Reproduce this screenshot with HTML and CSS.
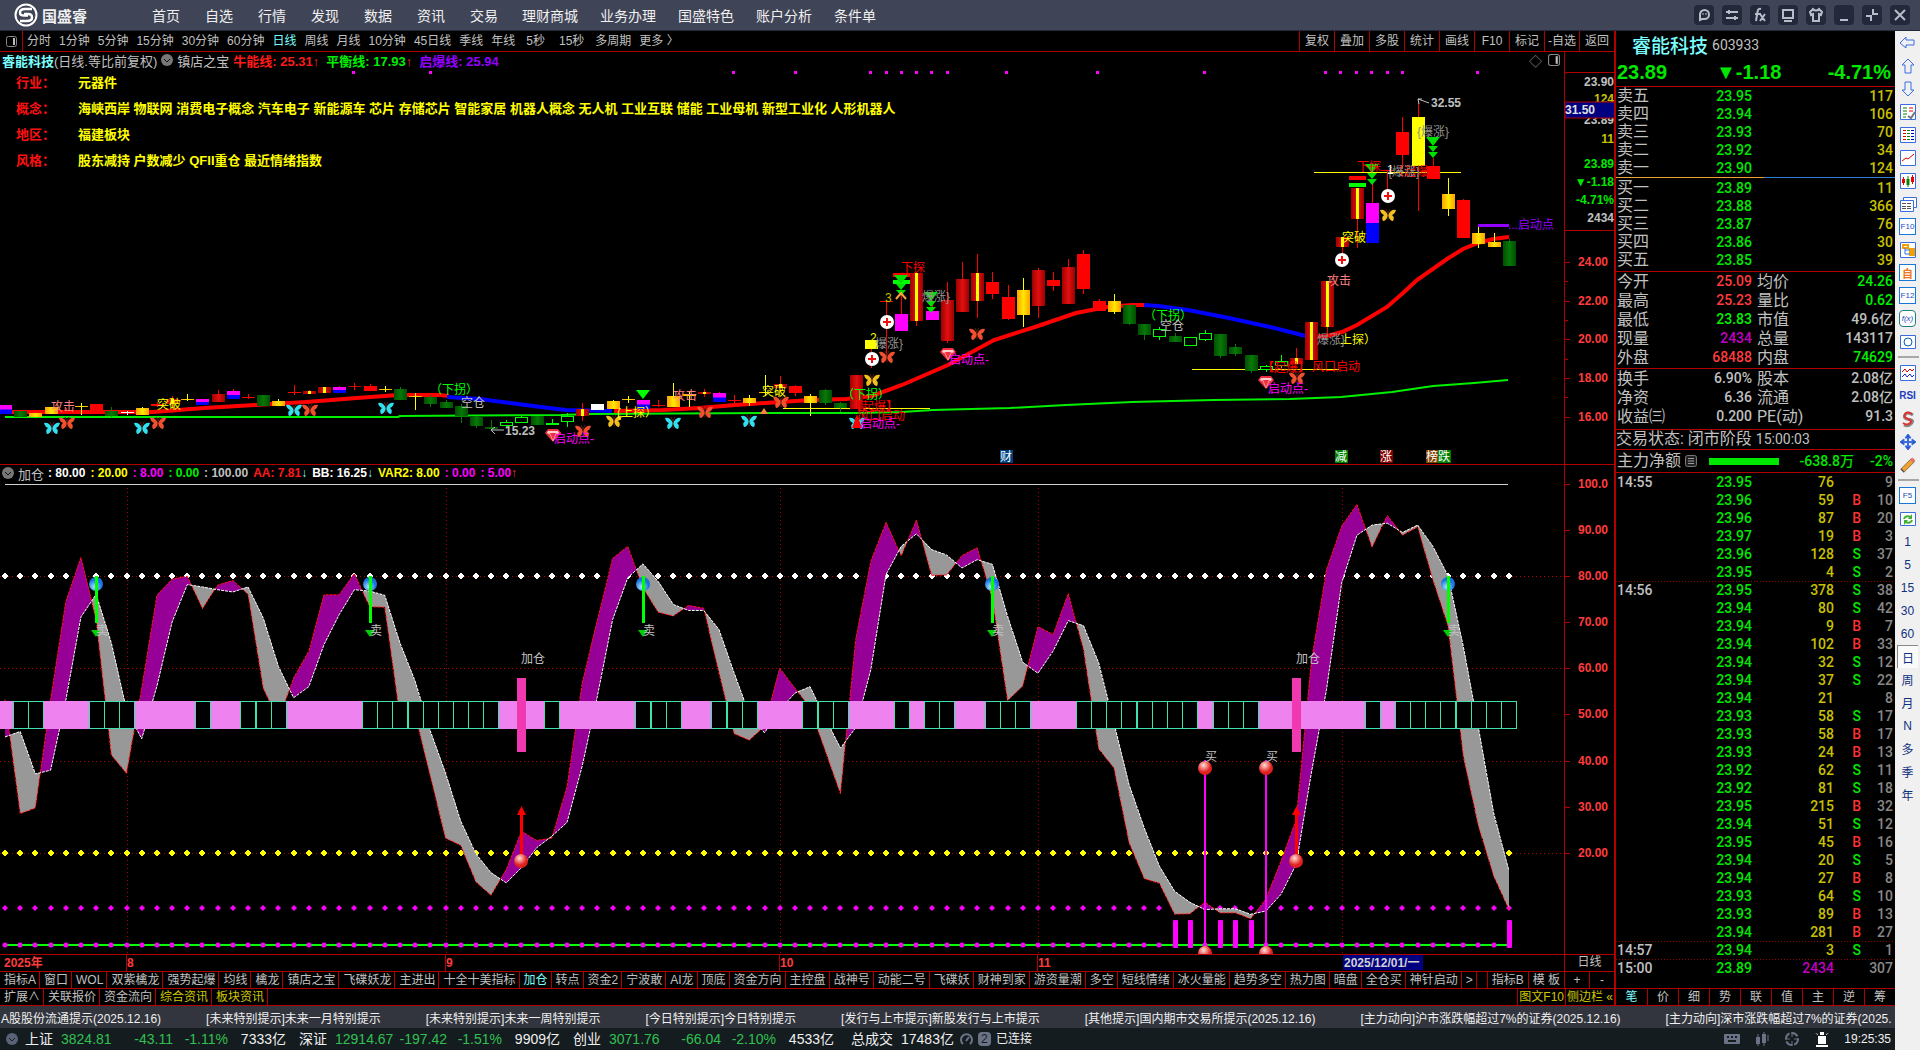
FILE: index.html
```html
<!DOCTYPE html>
<html lang="zh-CN">
<head>
  <meta charset="UTF-8" />
  <meta name="viewport" content="width=device-width, initial-scale=1.0"/>
  <title>国盛睿</title>
  <link rel="stylesheet" href="styles.css">
</head>
<body>

  <!-- Header -->
  <header class="topbar">
    <div class="logo">
      <svg width="24" height="24" viewBox="0 0 24 24" fill="none" stroke="#fff">
        <circle cx="12" cy="12" r="10.5" stroke-width="2"/>
        <path d="M18 6H11Q6 6 6 9.500T11 12.500H14" stroke-width="2.500"/>
        <path d="M10 11H14Q18 11 18 14.500T13 18H6" stroke-width="2.500"/>
      </svg>
      <b>国盛睿</b>
    </div>
    <nav class="menu">
      <div class="menu-group">
        <a href="#">首页</a><a href="#">自选</a><a href="#">行情</a><a href="#">发现</a><a href="#">数据</a><a href="#">资讯</a><a href="#">交易</a>
      </div>
      <div class="menu-group long">
        <a href="#">理财商城</a><a href="#">业务办理</a><a href="#">国盛特色</a><a href="#">账户分析</a><a href="#">条件单</a>
      </div>
    </nav>
    <div class="window-btns">
      <button aria-label="消息"><svg viewBox="0 0 20 20"><path d="M6 15V9.500a4.500 4.500 0 1 1 4.500 4.500H8z" stroke-width="2"/><path d="M9 8v2M12 8v2"/></svg></button>
      <button aria-label="切换"><svg viewBox="0 0 20 20"><path d="M4 7h12M4 13h12M7 5v4M13 11v4" stroke-width="2"/></svg></button>
      <button aria-label="公式"><svg viewBox="0 0 20 20"><path d="M11 4q-3-1-3.500 3L6 16M5 9h6M10 9l5 7M15 9l-5 7" stroke-width="2"/></svg></button>
      <button aria-label="屏幕"><svg viewBox="0 0 20 20"><path d="M5 5h10v8H5zM6 16h8" stroke-width="2"/></svg></button>
      <button aria-label="皮肤"><svg viewBox="0 0 20 20"><path d="M7 4L4 7l1 3 2-1v7h6V9l2 1 1-3-3-3q-3 3-6 0z" stroke-width="2"/></svg></button>
      <button aria-label="最小化"><svg viewBox="0 0 20 20"><path d="M6 15h8" stroke-width="2"/></svg></button>
      <button aria-label="还原"><svg viewBox="0 0 20 20"><path d="M4 11h5v5M16 9h-5V4" stroke-width="2"/></svg></button>
      <button aria-label="关闭"><svg viewBox="0 0 20 20"><path d="M5 5l10 10M15 5L5 15" stroke-width="2"/></svg></button>
    </div>
  </header>

  <div class="wrapper">
    <div class="main-content">
      <div class="workspace">

        <!-- Chart side -->
        <section class="chart-side">
          <div class="period-bar">
            <button class="panel-toggle" aria-label="面板"><svg width="11" height="11" viewBox="0 0 11 11"><rect x="0.500" y="0.500" width="10" height="10" rx="2" fill="none" stroke="#888"/><path d="M7 2h2v7H7z" fill="#bbb"/></svg></button>
            <div class="periods">
              <button>分时</button><button>1分钟</button><button>5分钟</button><button>15分钟</button><button>30分钟</button><button>60分钟</button><button class="active">日线</button><button>周线</button><button>月线</button><button>10分钟</button><button>45日线</button><button>季线</button><button>年线</button><button class="spaced">5秒</button><button class="spaced">15秒</button><button>多周期</button><button>更多 &#12297;</button>
            </div>
            <div class="chart-tools">
              <button>复权</button><button>叠加</button><button>多股</button><button>统计</button><button>画线</button><button>F10</button><button>标记</button><button>-自选</button><button>返回</button>
            </div>
          </div>

          <div class="chart-grid">
            <div class="pane">
              <svg id="kline" class="plot" viewBox="0 0 1564 412" preserveAspectRatio="xMinYMin meet">
                <defs>
                  <linearGradient id="goldFill"><stop offset="0" stop-color="#ffa000"/><stop offset="0.500" stop-color="#ffe800"/><stop offset="1" stop-color="#ffa000"/></linearGradient>
                  <linearGradient id="darkRedFill"><stop offset="0" stop-color="#a00000"/><stop offset="0.500" stop-color="#e01010"/><stop offset="1" stop-color="#a00000"/></linearGradient>
                  <linearGradient id="greenFill"><stop offset="0" stop-color="#005000"/><stop offset="0.500" stop-color="#087808"/><stop offset="1" stop-color="#005000"/></linearGradient>
                  <radialGradient id="blueBall" cx="0.400" cy="0.700"><stop offset="0" stop-color="#a8e4ff"/><stop offset="1" stop-color="#1a72e0"/></radialGradient>
                  <radialGradient id="redBall" cx="0.400" cy="0.300"><stop offset="0" stop-color="#ffe0d8"/><stop offset="1" stop-color="#e02020"/></radialGradient>
                  <symbol id="butterfly" viewBox="0 0 16 14">
                    <path d="M8 7Q5 1 0 2Q1 6 4 7Q1 9 3 13Q6 13 8 8Q10 13 13 13Q15 9 12 7Q15 6 16 2Q11 1 8 7Z" fill="currentColor"/>
                    <path d="M8 12V5L6 1M8 5L10 1" stroke="#5a2010" fill="none"/>
                  </symbol>
                  <symbol id="gem" viewBox="0 0 16 13">
                    <path d="M3 0H13L16 4L8 13L0 4Z" fill="#f03040"/>
                    <path d="M3 2H13L14 4L12 5L10 4H6L4 5L2 4Z" fill="#ffd0d0"/>
                    <path d="M5 5L8 12L11 5" stroke="#ff9090" fill="none"/>
                  </symbol>
                  <symbol id="plus" viewBox="0 0 14 14">
                    <circle cx="7" cy="7" r="7" fill="#fff"/><path d="M7 3V11M3 7H11" stroke="#f01010" stroke-width="2"/>
                  </symbol>
                  <symbol id="drops" viewBox="0 0 14 22">
                    <path d="M0 0H14L7 9ZM2 9H12L7 15ZM2 15H12L7 21Z" fill="#00e000"/>
                  </symbol>
                </defs>
              </svg>
              <div class="overlay">
                <div class="legend first">
                  <b class="cyan">睿能科技</b><span>(日线.等比前复权)</span>
                  <svg class="drop" width="12" height="12" viewBox="0 0 12 12"><circle cx="6" cy="6" r="6" fill="#777"/><path d="M3 5l3 3 3-3" fill="none" stroke="#111"/></svg>
                  <span>镇店之宝</span>
                  <b class="red">牛能线: 25.31<i class="up">↑</i></b>
                  <b class="green">平衡线: 17.93<i class="up">↑</i></b>
                  <b class="purple">启爆线: 25.94</b>
                  <span class="legend-tools">◇ <svg width="12" height="12" viewBox="0 0 11 11"><rect x="0.500" y="0.500" width="10" height="10" rx="2" fill="none" stroke="#888"/><path d="M7 2h2v7H7z" fill="#bbb"/></svg></span>
                </div>
                <dl class="facts">
                  <dt>行业：</dt><dd>元器件</dd>
                  <dt>概念：</dt><dd>海峡西岸 物联网 消费电子概念 汽车电子 新能源车 芯片 存储芯片 智能家居 机器人概念 无人机 工业互联 储能 工业母机 新型工业化 人形机器人</dd>
                  <dt>地区：</dt><dd>福建板块</dd>
                  <dt>风格：</dt><dd>股东减持 户数减少 QFII重仓 最近情绪指数</dd>
                </dl>
              </div>
            </div>
            <svg id="priceAxis" class="axis" viewBox="0 0 49 412" preserveAspectRatio="xMinYMin meet"></svg>

            <div class="pane">
              <svg id="indicator" class="plot" viewBox="0 0 1564 488" preserveAspectRatio="xMinYMin meet"></svg>
              <div class="overlay">
                <div class="legend second">
                  <svg class="drop" width="12" height="12" viewBox="0 0 12 12"><circle cx="6" cy="6" r="6" fill="#777"/><path d="M3 5l3 3 3-3" fill="none" stroke="#111"/></svg>
                  <span>加仓</span>
                  <b class="white">: 80.00</b><b class="yellow">: 20.00</b><b class="magenta">: 8.00</b><b class="green">: 0.00</b><b class="grey">: 100.00</b>
                  <b class="red">AA: 7.81<i class="down">↓</i></b>
                  <b class="white">BB: 16.25<i class="down">↓</i></b>
                  <b class="yellow">VAR2: 8.00</b><b class="magenta">: 0.00</b><b class="magenta">: 5.00<i class="up">↑</i></b>
                </div>
              </div>
            </div>
            <svg id="levelAxis" class="axis" viewBox="0 0 49 488" preserveAspectRatio="xMinYMin meet"></svg>

            <svg id="dates" class="dates" viewBox="0 0 1564 16" preserveAspectRatio="xMinYMin meet"></svg>
            <div class="date-unit">日线</div>
          </div>

          <div class="tabs">
            <button>指标A</button><button>窗口</button><button>WOL</button><button>双紫檎龙</button><button>强势起爆</button><button>均线</button><button>檎龙</button><button>镇店之宝</button><button>飞碟妖龙</button><button>主进出</button><button>十全十美指标</button><button class="active">加仓</button><button>转点</button><button>资金2</button><button>宁波敢</button><button>AI龙</button><button>顶底</button><button>资金方向</button><button>主控盘</button><button>战神号</button><button>动能二号</button><button>飞碟妖</button><button>财神到家</button><button>游资量潮</button><button>多空</button><button>短线情绪</button><button>冰火量能</button><button>趋势多空</button><button>热力图</button><button>暗盘</button><button>全仓买</button><button>神针启动</button><button>&gt;</button>
            <div class="tabs-end"><button>指标B</button><button>模 板</button><button class="zoom">+</button><button class="zoom">-</button></div>
          </div>
          <div class="tabs">
            <button>扩展∧</button><button>关联报价</button><button>资金流向</button><button class="gold">综合资讯</button><button class="gold">板块资讯</button>
            <div class="tabs-end"><button class="gold flush">图文F10</button><button class="gold flush">侧边栏 «</button></div>
          </div>
        </section>

        <!-- Quote side -->
        <aside class="quote">
          <h1><span>睿能科技</span><small>603933</small></h1>
          <div class="price"><b>23.89</b><b>▼-1.18</b><b>-4.71%</b></div>

          <table class="book">
            <tr><th>卖五</th><td>23.95</td><td>117</td></tr>
            <tr><th>卖四</th><td>23.94</td><td>106</td></tr>
            <tr><th>卖三</th><td>23.93</td><td>70</td></tr>
            <tr><th>卖二</th><td>23.92</td><td>34</td></tr>
            <tr><th>卖一</th><td>23.90</td><td>124</td></tr>
          </table>
          <div class="ratio"></div>
          <table class="book buy">
            <tr><th>买一</th><td>23.89</td><td>11</td></tr>
            <tr><th>买二</th><td>23.88</td><td>366</td></tr>
            <tr><th>买三</th><td>23.87</td><td>76</td></tr>
            <tr><th>买四</th><td>23.86</td><td>30</td></tr>
            <tr><th>买五</th><td>23.85</td><td>39</td></tr>
          </table>

          <table class="stats">
            <tr><th>今开</th><td class="red">25.09</td><th>均价</th><td class="green">24.26</td></tr>
            <tr><th>最高</th><td class="red">25.23</td><th>量比</th><td class="green">0.62</td></tr>
            <tr><th>最低</th><td class="green">23.83</td><th>市值</th><td>49.6亿</td></tr>
            <tr><th>现量</th><td class="violet">2434</td><th>总量</th><td>143117</td></tr>
            <tr><th>外盘</th><td class="red">68488</td><th>内盘</th><td class="green">74629</td></tr>
          </table>
          <table class="stats extra">
            <tr><th>换手</th><td>6.90%</td><th>股本</th><td>2.08亿</td></tr>
            <tr><th>净资</th><td>6.36</td><th>流通</th><td>2.08亿</td></tr>
            <tr><th>收益㈢</th><td>0.200</td><th>PE(动)</th><td>91.3</td></tr>
          </table>

          <div class="state">交易状态: 闭市阶段 <span>15:00:03</span></div>
          <div class="flow">
            <span>主力净额</span>
            <svg width="12" height="12" viewBox="0 0 12 12"><rect x="0.500" y="0.500" width="11" height="11" rx="2" fill="#222" stroke="#777"/><path d="M3 3.500h6M3 6h6M3 8.500h6" stroke="#999"/></svg>
            <i class="flow-bar"></i>
            <b>-638.8万</b><b class="pct">-2%</b>
          </div>

          <table class="ticks"><tbody id="tickRows"></tbody></table>

          <div class="quote-tabs">
            <button class="active">笔</button><button>价</button><button>细</button><button>势</button><button>联</button><button>值</button><button>主</button><button>逆</button><button>筹</button>
          </div>
        </aside>
      </div>

      <!-- News ticker -->
      <div class="news">
        <a href="#">A股股份流通提示(2025.12.16)</a>
        <a href="#">[未来特别提示]未来一月特别提示</a>
        <a href="#">[未来特别提示]未来一周特别提示</a>
        <a href="#">[今日特别提示]今日特别提示</a>
        <a href="#">[发行与上市提示]新股发行与上市提示</a>
        <a href="#">[其他提示]国内期市交易所提示(2025.12.16)</a>
        <a href="#">[主力动向]沪市涨跌幅超过7%的证券(2025.12.16)</a>
        <a href="#">[主力动向]深市涨跌幅超过7%的证券(2025.</a>
      </div>

      <!-- Status bar -->
      <footer class="status">
        <svg class="drop" width="12" height="12" viewBox="0 0 12 12"><circle cx="6" cy="6" r="6" fill="#5a6278"/><path d="M3 5l3 3 3-3" fill="none" stroke="#151c20"/></svg>
        <div class="index"><span>上证</span><em>3824.81</em><em>-43.11</em><em>-1.11%</em><span>7333亿</span></div>
        <div class="index"><span>深证</span><em>12914.67</em><em>-197.42</em><em>-1.51%</em><span>9909亿</span></div>
        <div class="index"><span>创业</span><em>3071.76</em><em>-66.04</em><em>-2.10%</em><span>4533亿</span></div>
        <div class="total"><span>总成交</span><span>17483亿</span></div>
        <div class="link-state">
          <svg width="13" height="13" viewBox="0 0 13 13" fill="none" stroke="#6a7386" stroke-width="2"><path d="M3 11a5.500 5.500 0 1 1 7 0M6 8l3-4"/></svg>
          <i>2</i><small>已连接</small>
        </div>
        <div class="status-icons">
          <svg width="16" height="14" viewBox="0 0 16 14"><rect y="2" width="16" height="10" rx="1" fill="#6a7386"/><path d="M3 5h2M7 5h2M11 5h2M4 9h8" stroke="#151c20" stroke-width="2"/></svg>
          <svg width="14" height="16" viewBox="0 0 14 16"><path d="M1 6h4v7H1zM7 3h4v9H7z" fill="#6a7386"/><path d="M3 3v12M9 1v14M13 4v6" stroke="#6a7386"/></svg>
          <svg width="16" height="16" viewBox="0 0 16 16" fill="none" stroke="#6a7386" stroke-width="2"><circle cx="8" cy="8" r="6" stroke-dasharray="7 2"/><path d="M8 1v5M8 10v5M1 8h5M10 8h5" stroke-width="1"/></svg>
          <svg width="14" height="15" viewBox="0 0 14 15" fill="#fff"><path d="M3 4h8v8H3zM1 13h12v2H1zM5 0h4v3H5zM0 1l3 1v1zM14 1l-3 1v1z"/></svg>
          <time>19:25:35</time>
        </div>
      </footer>
    </div>

    <!-- Tool strip -->
    <div class="toolstrip">
      <button aria-label="后退"><svg viewBox="0 0 18 18"><path d="M1 9l6-6v3h8v5H7v3z"/></svg></button>
      <button aria-label="上移"><svg viewBox="0 0 18 18"><path d="M9 2l6 6h-3v8H6V8H3z"/></svg></button>
      <button aria-label="下移"><svg viewBox="0 0 18 18"><path d="M9 16l6-6h-3V2H6v8H3z"/></svg></button>
      <button aria-label="报价"><svg viewBox="0 0 18 18"><path class="frame" d="M1.500 1.500h15v15h-15z"/><path d="M4 5h4M4 8h4M4 11h4M4 14h3" stroke="#0a7a0a"/><path d="M10 5h4M10 8h4" stroke="#d00"/><path d="M9 13l3 2 4-6" stroke="#777" stroke-width="2"/></svg></button>
      <button aria-label="行情表"><svg viewBox="0 0 18 18"><path class="frame" d="M1.500 1.500h15v15h-15z"/><path d="M4 4.500h3M4 7.500h3M4 10.500h3M4 13.500h3" stroke="#d00"/><path d="M8 4.500h3M8 7.500h3M8 10.500h3M8 13.500h3" stroke="#080"/><path d="M12 4.500h3M12 7.500h3M12 10.500h3M12 13.500h3" stroke="#00c"/></svg></button>
      <button aria-label="分时图"><svg viewBox="0 0 18 18"><path class="frame" d="M1.500 1.500h15v15h-15z"/><path d="M3 12l4-3 2 1 6-5" stroke="#d00"/></svg></button>
      <button aria-label="K线图"><svg viewBox="0 0 18 18"><path class="frame" d="M1.500 1.500h15v15h-15z"/><path d="M4.500 5v8M13.500 3v9" stroke="#e00"/><path d="M4.500 7v4M13.500 5v5" stroke="#e00" stroke-width="3"/><path d="M9 4v11" stroke="#080"/><path d="M9 7v6" stroke="#080" stroke-width="3"/></svg></button>
      <button aria-label="多窗"><svg viewBox="0 0 18 18"><path class="frame" d="M4.500 5V2.500h13v10h-3M1.500 5.500h13v11h-13z"/><path d="M3 8.500h4M8 8.500h4M3 11.500h4M8 11.500h4M3 13.500h4M8 13.500h4" stroke="#555"/></svg></button>
      <button class="boxed">F10</button>
      <button aria-label="结构"><svg viewBox="0 0 18 18"><path class="frame" d="M1.500 1.500h15v15h-15z"/><path d="M4 4h5v3H4zM11 8h4v2h-4zM11 12h4v2h-4z" stroke="#f0a000" stroke-width="2"/><path d="M6 7v6h5M6 9h5"/></svg></button>
      <button class="boxed self">自</button>
      <button class="boxed">F12</button>
      <button class="boxed round"><i>f(x)</i></button>
      <button aria-label="圆"><svg viewBox="0 0 18 18"><path class="frame" d="M1.500 2.500h15v13h-15z"/><circle cx="9" cy="9" r="4" stroke="#0a5ab8"/></svg></button>
      <hr>
      <button aria-label="波动"><svg viewBox="0 0 18 18"><path class="frame" d="M1.500 1.500h15v15h-15z"/><path d="M3 8l3-3 2 3 3-3 2 2 2-2" stroke="#d00"/><path d="M3 13l3-3 2 3 3-3 2 3 2-2" stroke="#22c"/></svg></button>
      <button class="rsi">RSI</button>
      <button aria-label="资金"><svg viewBox="0 0 18 18"><path d="M14 5Q8 1 6 5T10 9.500T12 14Q9 17 5 15" stroke="#888" stroke-width="3"/><path d="M13 4Q8 1 6 4T9 9T11 13Q8 16 4 13" stroke="#e03030" stroke-width="2"/></svg></button>
      <button aria-label="移动"><svg viewBox="0 0 18 18"><path d="M9 1l3 4H6zM9 17l3-4H6zM1 9l4-3v6zM17 9l-4-3v6zM8 8h2v2H8z" fill="#1850c8"/><path d="M9 4v10M4 9h10" stroke-width="2"/></svg></button>
      <button aria-label="画笔"><svg viewBox="0 0 18 18"><path d="M3 15L14 4" stroke="#555" stroke-width="5"/><path d="M4 14L13 5" stroke="#f0a030" stroke-width="4"/><path d="M13 5l2-2" stroke="#f07070" stroke-width="4"/></svg></button>
      <hr>
      <button class="boxed">F5</button>
      <button aria-label="刷新"><svg viewBox="0 0 18 18"><path class="frame" d="M1.500 2.500h15v13h-15z"/><path d="M5 9q1-4 7-2M13 10q-1 4-7 2" stroke="#40b030" stroke-width="2"/><path d="M13 4v5H9zM5 15v-5h4z" fill="#40b030" stroke="none"/></svg></button>
      <button>1</button><button>5</button><button>15</button><button>30</button><button>60</button>
      <button class="pressed cn">日</button><button class="cn">周</button><button class="cn">月</button><button>N</button><button class="cn">多</button><button class="cn">季</button><button class="cn">年</button>
    </div>
  </div>

  <script src="chart.js"></script>
</body>
</html>
```
FILE: styles.css
```css
* { margin: 0; padding: 0; box-sizing: border-box; }

body {
  height: 100vh;
  display: flex;
  flex-direction: column;
  overflow: hidden;
  background-color: #000;
  color: #c0c0c0;
  font-family: "Liberation Sans", "Noto Sans CJK SC", sans-serif;
  font-size: 12px;
}

button {
  background: none;
  border: none;
  color: inherit;
  font: inherit;
  white-space: nowrap;
  cursor: pointer;
}
a { color: inherit; text-decoration: none; white-space: nowrap; }

.cyan { color: #7cffff; }
.red { color: #ff1a1a; }
.green { color: #00f000; }
.purple { color: #9400ff; }
.yellow { color: #ff0; }
.magenta { color: #f0f; }
.white { color: #fff; }
.grey { color: #c0c0c0; }

/* Header */
.topbar {
  display: flex;
  align-items: center;
  flex: none;
  height: 31px;
  padding: 0 10px 0 14px;
  background-color: #3f4456;
  border-bottom: 1px solid #23283a;
  color: #f0f0f0;
  font-size: 14px;
}
.logo {
  display: flex;
  align-items: center;
  gap: 4px;
  width: 138px;
  font-size: 15px;
}
.menu, .menu-group { display: flex; }
.menu { gap: 24px; }
.menu-group { gap: 25px; }
.menu-group.long { gap: 22px; }
.window-btns {
  display: flex;
  gap: 8px;
  margin-left: auto;
}
.window-btns button {
  width: 20px;
  height: 20px;
  border-radius: 4px;
  background-color: #23283a;
}
.window-btns svg {
  display: block;
  fill: none;
  stroke: #b8bcc8;
}

.wrapper {
  display: flex;
  flex: 1;
  min-height: 0;
}
.main-content {
  display: flex;
  flex-direction: column;
  flex: 1;
  min-width: 0;
}
.workspace {
  display: flex;
  flex: 1;
  min-height: 0;
}

/* Chart side */
.chart-side {
  display: flex;
  flex-direction: column;
  flex: 1;
  min-width: 0;
}
.period-bar {
  display: flex;
  flex: none;
  height: 21px;
  border-bottom: 1px solid #b00000;
}
.panel-toggle {
  width: 23px;
  border-right: 1px solid #b00000;
}
.panel-toggle svg { vertical-align: middle; }
.periods {
  display: flex;
  gap: 8px;
  padding-left: 4px;
}
.period-bar button { line-height: 18px; }
.periods .active, .tabs .active, .quote-tabs .active { color: #7cffff; }
.periods .spaced { margin: 0 3px; }
.chart-tools {
  display: flex;
  margin-left: auto;
}
.chart-tools button {
  width: 35px;
  border-left: 1px solid #b00000;
}

.chart-grid {
  display: grid;
  flex: 1;
  min-height: 0;
  grid-template-columns: minmax(0, 1fr) 50px;
  grid-template-rows: minmax(0, 413fr) minmax(0, 489fr) 16px;
}
.pane {
  display: grid;
  border-bottom: 1px solid #b00000;
}
.pane > * {
  grid-area: 1 / 1;
  min-width: 0;
  min-height: 0;
}
.plot { width: 100%; height: 100%; }
.axis {
  width: 100%;
  height: 100%;
  border-left: 1px solid #b00000;
  border-bottom: 1px solid #b00000;
}
svg text {
  font-size: 12px;
  fill: #c0c0c0;
}
svg .num { font-weight: bold; }
.dates { width: 100%; height: 100%; }
.date-unit {
  border-left: 1px solid #b00000;
  text-align: center;
  line-height: 14px;
}

.legend {
  display: flex;
  align-items: center;
  gap: 4px;
  height: 16px;
  padding-left: 2px;
  font-size: 12px;
  white-space: nowrap;
}
.legend span, .legend.first b { font-size: 13px; }
.legend.first b { margin-right: 3px; }
.legend.first b.cyan { margin-right: -4px; }
.legend.second b { margin-right: 1px; }
.legend i { font-style: normal; font-weight: normal; }
.up { color: #ff3030; }
.down { color: #7cffff; }
.legend span.legend-tools {
  display: flex;
  align-items: center;
  gap: 6px;
  margin-left: auto;
  padding-right: 4px;
  color: #888;
}

.facts {
  display: grid;
  grid-template-columns: 62px 1fr;
  grid-auto-rows: 26px;
  padding-left: 16px;
  align-items: center;
  font-size: 13px;
  font-weight: bold;
  white-space: nowrap;
}
.facts dt { color: #ff1010; }
.facts dd { color: #ff0; }

.tabs {
  display: flex;
  flex: none;
  height: 17px;
  border-top: 1px solid #b00000;
  overflow: hidden;
}
.tabs:last-child { height: 18px; border-bottom: 1px solid #b00000; }
.tabs button {
  padding: 0 3px 0 4px;
  border-right: 1px solid #b00000;
  line-height: 15px;
}
.tabs-end {
  display: flex;
  margin-left: auto;
}
.tabs-end button { border-right: none; border-left: 1px solid #b00000; }
.tabs .tabs-end button { padding: 0 4px; }
.tabs .zoom { width: 25px; }
.tabs .gold { color: #d0c800; }
.tabs .tabs-end .flush { padding: 0 1px; }

/* Quote side */
.quote {
  display: flex;
  flex-direction: column;
  width: 281px;
  border-left: 2px solid #b00000;
  font-family: Roboto, "Noto Sans CJK SC", sans-serif;
  font-size: 14px;
  font-weight: 500;
}
.quote h1 {
  display: flex;
  align-items: center;
  gap: 4px;
  height: 27px;
  padding-left: 16px;
  color: #7cffff;
  font-size: 19px;
  font-weight: 500;
}
.quote small {
  color: #c0c0c0;
  font-size: 14px;
  font-weight: normal;
}
.price {
  display: grid;
  grid-template-columns: 99px 1fr auto;
  align-items: center;
  height: 29px;
  padding: 0 4px 0 1px;
  border-bottom: 1px solid #b00000;
  color: #00e800;
  font-family: "Liberation Sans", "DejaVu Sans", sans-serif;
  font-size: 20px;
}
.quote table {
  width: 100%;
  border-collapse: collapse;
  table-layout: fixed;
}
.quote th {
  padding-left: 1px;
  text-align: left;
  font-size: 16px;
  font-weight: normal;
  line-height: 18px;
}
.quote td {
  padding: 0;
  text-align: right;
  line-height: 18px;
}
.book th { width: 56px; }
.book td { color: #00e800; }
.book td:nth-child(2) { width: 80px; }
.book td:last-child { color: #c8c000; padding-right: 2px; }
.ratio {
  height: 1px;
  margin-bottom: 1px;
  background: linear-gradient(90deg, #f0a030 53%, #3080d0 53%);
}
.buy { margin-bottom: 2px; }
.stats { border-top: 1px solid #b00000; }
.stats tr { height: 19px; }
.stats th { width: 60px; line-height: 19px; }
.stats td { line-height: 19px; }
.stats td:nth-child(2) { width: 76px; }
.stats th:nth-child(3) { padding-left: 5px; }
.stats td:last-child { padding-right: 2px; }
.stats .red { color: #ff3c3c; }
.stats .violet, .ticks .violet { color: #c000c0; }
.stats.extra { margin: 1px 0 3px; }
.state, .flow {
  border-top: 1px solid #b00000;
  font-size: 16px;
  font-weight: normal;
  white-space: nowrap;
}
.state { height: 20px; line-height: 18px; }
.state span { font-size: 14px; }
.flow {
  display: flex;
  align-items: center;
  gap: 4px;
  height: 23px;
  padding: 0 2px 0 1px;
  line-height: 20px;
}
.flow b {
  margin-left: auto;
  color: #00e800;
  font-size: 14px;
  font-weight: 500;
}
.flow b.pct { margin-left: 12px; }
.flow-bar {
  width: 70px;
  height: 7px;
  margin-left: 8px;
  background-color: #00e800;
}
.ticks { border-top: 1px solid #b00000; }
.ticks td { padding-right: 2px; }
.ticks td:nth-child(1) { width: 56px; padding-left: 1px; text-align: left; }
.ticks td:nth-child(2) { width: 82px; color: #00e800; }
.ticks td:nth-child(3) { width: 82px; color: #c8c000; }
.ticks td:nth-child(4) { width: 27px; }
.ticks td:nth-child(5) { color: #888; }
.ticks td.violet:nth-child(3) { color: #c000c0; }
.ticks .minute { background: repeating-linear-gradient(90deg, #900000 0 1px, #000 1px 3px) top / 100% 1px no-repeat; }
.ticks .buyer { color: #ff3030; }
.ticks .seller { color: #00e800; }
.quote-tabs {
  display: grid;
  grid-template-columns: repeat(9, 1fr);
  height: 18px;
  margin-top: auto;
  border-top: 1px solid #b00000;
  border-bottom: 1px solid #b00000;
  font-size: 12px;
  font-weight: normal;
}
.quote-tabs button { line-height: 15px; }
.quote-tabs button + button { border-left: 1px solid #b00000; }

/* News ticker */
.news {
  display: flex;
  align-items: center;
  flex: none;
  gap: 45px;
  height: 22px;
  padding-left: 1px;
  overflow: hidden;
  background-color: #32353d;
  color: #f0f0f0;
}

/* Status bar */
.status {
  display: flex;
  align-items: center;
  flex: none;
  height: 22px;
  padding: 0 4px 0 6px;
  background-color: #151c20;
  color: #f0f0f0;
  font-size: 14px;
  line-height: 20px;
  white-space: nowrap;
}
.index {
  display: grid;
  grid-template-columns: 36px 58px 54px 55px 58px;
  align-items: baseline;
  padding-left: 7px;
  margin-right: 6px;
  text-align: right;
}
.index em { color: #30c050; font-style: normal; }
.index span:first-child, .index em:nth-child(2) { text-align: left; }
.total {
  display: flex;
  gap: 8px;
  padding: 0 6px 0 11px;
}
.link-state {
  display: flex;
  align-items: center;
  gap: 5px;
}
.link-state i {
  width: 13px;
  border-radius: 4px;
  background-color: #6a7386;
  color: #151c20;
  font-size: 12px;
  font-style: normal;
  line-height: 14px;
  text-align: center;
}
.link-state small { font-size: 12px; }
.status-icons {
  display: flex;
  align-items: center;
  gap: 15px;
  margin-left: auto;
}
.status-icons time { font-size: 12px; }

/* Tool strip */
.toolstrip {
  display: flex;
  flex-direction: column;
  width: 25px;
  padding-left: 2px;
  background-color: #f0f0f0;
  color: #103080;
}
.toolstrip button {
  display: flex;
  align-items: center;
  justify-content: center;
  flex: none;
  width: 21px;
  height: 23px;
}
.toolstrip svg {
  width: 18px;
  height: 18px;
  flex: none;
  fill: none;
  stroke: #3a6ee0;
}
.toolstrip .frame { fill: #fff; }
.toolstrip hr {
  height: 2px;
  margin: 3px 1px;
  border: none;
  background-color: #a8a8a8;
}
.toolstrip .boxed {
  width: 17px;
  height: 17px;
  margin: 3px 2px;
  border: 1px solid #1878d8;
  background-color: #fff;
  color: #1848c0;
  font-size: 8px;
}
.toolstrip .self { color: #f07820; font-weight: bold; font-size: 11px; }
.toolstrip .round { border-color: #208080; border-radius: 4px; }
.toolstrip .rsi { color: #2040c0; font-size: 10px; font-weight: bold; }
.toolstrip .cn { font-size: 12px; }
.toolstrip .pressed {
  border-top: 1px solid #888;
  border-left: 1px solid #888;
  background-color: #fafafa;
}
```
FILE: chart.js
```js
const NS = 'http://www.w3.org/2000/svg';
const FIRST_X = 5;
const STEP = 15.19;

function add(parent, tag, attrs, text) {
  const el = document.createElementNS(NS, tag);
  for (const key in attrs) el.setAttribute(key, attrs[key]);
  if (text) el.textContent = text;
  parent.appendChild(el);
  return el;
}

function barX(i) {
  return Math.round(FIRST_X + STEP * i);
}

function label(svg, x, y, text, color, cls) {
  add(svg, 'text', { x: x, y: y + 4, style: 'fill:' + color, class: cls || '' }, text);
}

/* ---------- K line ---------- */
// kind, high, body top, body bottom, low
const candles = [
  ['b',353,353,362,362],['g',359,359,365,365],['y',361,361,365,365],['y',355,355,362,362],['r',356,358,359,362],
  ['y',351,354,355,363],['r',352,352,359,359],['g',355,359,364,365],['w',359,360,361,363],['y',355,356,363,363],
  ['r',350,352,354,355],['t',344,347,352,358],['y',342,347,348,349],['b',347,347,353,353],['d',338,342,350,350],
  ['b',337,339,347,347],['r',342,345,346,347],['g',343,343,354,354],['y',347,349,354,354],['r',333,340,341,343],
  ['t',338,339,342,342],['t',335,335,341,341],['b',334,335,341,341],['d',331,334,335,338],['r',332,334,339,339],
  ['y',334,337,338,340],['g',335,337,348,348],['y',341,344,345,358],['g',343,345,352,355],['g',348,350,356,356],
  ['g',352,354,364,371],['g',364,364,374,376],['g',368,375,377,377],['h',368,370,373,376],['h',364,365,370,370],
  ['g',364,364,373,373],['h',367,371,372,372],['h',361,364,369,375],['t',351,357,364,369],['w',352,352,358,358],
  ['y',348,349,357,357],['y',344,347,348,351],['b',348,348,357,357],['r',348,353,354,355],['y',331,344,355,355],
  ['y',339,342,344,355],['t',337,340,342,345],['b',340,341,350,350],['r',343,348,349,351],['y',343,346,351,354],
  ['y',323,340,341,344],['t',324,332,336,340],['r',333,334,341,344],['y',342,344,351,364],['g',337,338,351,353],
  ['g',350,351,356,360],['d',323,323,357,357],['Y',288,288,297,316],['r',249,249,250,305],['m',241,262,279,279],
  ['t',220,221,269,274],['m',250,259,268,268],['d',230,248,289,291],['d',210,227,260,260],['t',202,221,249,266],
  ['r',220,230,242,247],['r',233,245,267,268],['y',226,238,263,275],['d',216,218,254,266],['r',220,228,234,239],
  ['d',207,215,252,252],['r',198,202,237,242],['r',247,249,259,259],['y',242,249,260,262],['g',253,253,272,273],
  ['g',272,272,283,288],['h',275,277,284,288],['g',281,284,290,290],['h',285,285,293,293],['h',278,281,287,289],
  ['g',282,282,304,306],['g',292,295,302,304],['g',303,303,319,321],['h',313,314,317,320],['h',303,309,313,316],
  ['t',296,306,312,312],['t',270,270,308,308],['t',229,229,275,283],['t',185,185,195,202],['t',136,136,167,196],
  ['b',130,151,191,191],['r',118,118,119,150],['r',65,80,103,115],['Y',49,65,114,159],['r',106,114,127,127],
  ['y',126,142,157,164],['r',147,148,186,186],['y',175,181,192,196],['y',181,190,195,195],['g',187,189,214,214]
];

const fills = {
  b: '#f0f', m: '#f0f', g: 'url(#greenFill)', y: 'url(#goldFill)', r: '#f00',
  w: '#fff', t: 'url(#darkRedFill)', d: 'url(#darkRedFill)', h: '#000', Y: '#ff0'
};
const wicks = {
  b: '#f00', m: '#f00', g: '#087808', y: '#ff0', r: '#f00',
  w: '#fff', t: '#f00', d: '#f00', h: '#0f0', Y: '#f00'
};

const averages = [
  ['#00f000', 2, '5,365 398,365 400,364 561,363 592,362 780,361 856,361 902,360 933,358 1010,356 1066,353 1132,350 1214,348 1290,347 1341,345 1392,340 1433,334 1474,331 1508,328'],
  ['#f00', 4, '10,360 153,360 204,356 255,353 306,350 357,346 398,343 439,343 449,344'],
  ['#00f', 4, '447,345 480,347 510,351 541,355 566,358 612,359'],
  ['#f00', 4, '614,359 663,358 699,356 735,353 780,350 811,348 846,347 872,344 902,333 948,313 994,288 1035,275 1076,261 1107,255 1132,253 1146,253'],
  ['#00f', 4, '1144,253 1158,254 1188,258 1229,266 1270,275 1306,284'],
  ['#f00', 4, '1306,285 1327,284 1342,280 1357,273 1387,255 1403,241 1417,228 1447,207 1463,197 1478,191 1493,187 1509,185'],
  ['#ff0', 1, '783,356.5 930,356.5'],
  ['#ff0', 1, '1192,317.5 1339,317.5'],
  ['#ff0', 1, '1314,120.5 1461,120.5'],
  ['#9400ff', 3, '1478,173.5 1509,173.5']
];

function drawKline() {
  const svg = document.getElementById('kline');

  [353,430,733,795,870,886,901,916,931,947,1006,1097,1204,1325,1340,1356,1371,1387,1402,1477].forEach(x => {
    add(svg, 'rect', { x: x - 1, y: 19, width: 3, height: 3, fill: '#f0f' });
  });

  averages.forEach(a => {
    add(svg, 'polyline', { points: a[2], fill: 'none', stroke: a[0], 'stroke-width': a[1] });
  });

  candles.forEach((c, i) => {
    const [kind, high, top, bottom, low] = c;
    const x = barX(i);
    const h = Math.max(1, bottom - top);
    add(svg, 'rect', { x: x, y: high, width: 1, height: low - high, fill: wicks[kind] });
    add(svg, 'rect', { x: x - 6, y: top, width: 13, height: h, fill: fills[kind] });
    if (kind === 'b') add(svg, 'rect', { x: x - 6, y: top + h / 2, width: 13, height: h / 2, fill: '#00f' });
    if (kind === 't') add(svg, 'rect', { x: x - 1, y: top, width: 3, height: h, fill: '#ff0' });
    if (kind === 'h') add(svg, 'rect', { x: x - 5.5, y: top + 0.5, width: 12, height: h, fill: '#000', stroke: '#0f0' });
  });

  const bars = [[893,221,'#f00'],[893,228,'#0f0'],[1349,124,'#f00'],[1349,131,'#0f0']];
  bars.forEach(b => add(svg, 'rect', { x: b[0], y: b[1], width: 17, height: 4, fill: b[2] }));

  // markers: symbol, centre x, centre y, colour
  const cyan = '#30e0f0', red = '#f05030', gold = '#f0c020';
  const flies = [
    [52,376,cyan],[67,371,red],[142,376,cyan],[158,371,red],[294,358,cyan],[310,358,red],[386,356,cyan],[583,379,red],
    [614,369,gold],[673,371,cyan],[705,360,red],[749,369,cyan],[781,350,red],[887,305,red],[872,328,gold],[977,282,red],
    [857,371,cyan],[1297,326,red],[1388,163,gold]
  ];
  flies.forEach(f => add(svg, 'use', { href: '#butterfly', x: f[0] - 8, y: f[1] - 7, width: 16, height: 14, color: f[2] }));
  [[553,384],[948,303],[1266,331]].forEach(p => add(svg, 'use', { href: '#gem', x: p[0] - 8, y: p[1] - 7, width: 16, height: 13 }));
  [[887,270],[872,307],[1342,208],[1388,144]].forEach(p => add(svg, 'use', { href: '#plus', x: p[0] - 7, y: p[1] - 7, width: 14, height: 14 }));
  [[901,223],[1372,112],[1433,85],[931,240]].forEach(p => add(svg, 'use', { href: '#drops', x: p[0] - 7, y: p[1], width: 14, height: 22 }));
  add(svg, 'path', { d: 'M636 338H650L643 347Z', fill: '#0f0' });
  add(svg, 'path', { d: 'M896 247L901 241L906 247', fill: 'none', stroke: '#ffa040', 'stroke-width': 2 });
  add(svg, 'path', { d: 'M760 362H768L764 356Z', fill: '#ff8040' });
  add(svg, 'path', { d: 'M852 376H862L857 362Z', fill: '#f00' });

  const salmon = '#ff8080', yellow = '#ff0', green = '#0f0', grey = '#909090', silver = '#c0c0c0', magenta = '#f0f', hot = '#f00';
  const notes = [
    [51,355,'攻击',salmon],[157,353,'突破',yellow],[430,338,'（下拐）',green],[461,351,'空仓',silver],[554,387,'启动点-',magenta],
    [617,361,'(上探）',yellow],[673,344,'攻击',salmon],[762,340,'突破',yellow],[901,216,'下探',hot],[885,246,'3','#c0c000'],
    [922,245,'爆涨}',grey],[870,286,'2',yellow],[875,292,'爆涨}',grey],[949,308,'启动点-',magenta],[842,343,'（下拐）',green],
    [850,355,'【起爆】',hot],[857,364,'风口启动',hot],[860,372,'启动点-',magenta],[1144,264,'（下拐）',green],[1160,274,'空仓',silver],
    [1262,316,'【起爆】',hot],[1312,315,'风口启动',hot],[1268,337,'启动点-',magenta],[1340,288,'上探）',yellow],[1317,288,'爆涨}',grey],
    [1327,229,'攻击',salmon],[1342,186,'突破',yellow],[1357,115,'下探',hot],[1392,120,'【起爆',hot],[1388,120,'{爆涨}',grey],
    [1387,118,'1','#fff'],[1417,80,'{爆涨}',grey],[1508,173,'...启动点','#9400ff']
  ];
  notes.forEach(n => label(svg, n[0], n[1], n[2], n[3]));

  add(svg, 'path', { d: 'M504 378H491L495 375M491 378L495 382M1429 51L1418 47L1419 52M1418 47H1422', fill: 'none', stroke: silver });
  label(svg, 505, 379, '15.23', silver, 'num');
  label(svg, 1431, 51, '32.55', silver, 'num');

  const tags = [[1000,'财','#004080'],[1335,'减','#008000'],[1380,'涨','#800000'],[1426,'榜','#804000'],[1438,'跌','#008000']];
  tags.forEach(t => {
    add(svg, 'rect', { x: t[0], y: 398, width: 13, height: 13, fill: t[2] });
    label(svg, t[0], 405, t[1], '#fff');
  });
}

function drawPriceAxis() {
  const svg = document.getElementById('priceAxis');
  for (let i = 0; i < 9; i++) {
    add(svg, 'rect', { x: 0, y: Math.round(210 + 19.35 * i), width: i % 2 ? 3 : 5, height: 1, fill: '#b00000' });
  }
  ['24.00', '22.00', '20.00', '18.00', '16.00'].forEach((p, i) => {
    label(svg, 13, Math.round(210 + 38.7 * i), p, '#ff3c3c', 'num');
  });
  const side = [[29,'23.90','#c0c0c0'],[46,'124','#c8c000'],[67,'23.89','#c0c0c0'],[86,'11','#c8c000'],[111,'23.89','#00e800'],
    [129,'▼-1.18','#00e800'],[147,'-4.71%','#00e800'],[165,'2434','#c0c0c0']];
  side.forEach(s => add(svg, 'text', { x: 49, y: s[0] + 5, 'text-anchor': 'end', class: 'num', style: 'fill:' + s[2] }, s[1]));
  add(svg, 'rect', { x: 0, y: 50, width: 50, height: 16, fill: '#000080', stroke: '#b00000' });
  label(svg, 0, 58, '31.50', '#e0e0e0', 'num');
  [20, 178].forEach(y => add(svg, 'rect', { x: 0, y: y, width: 50, height: 1, fill: '#b00000' }));
}

/* ---------- Indicator ---------- */
const AA = [
  53.2,28.5,29.7,53.2,74.4,84,70.5,41.2,37.2,55.7,75.8,79.3,79.9,72.9,78,79,76,55.7,48.7,57.9,
  63.7,75.9,75.9,80.5,73.3,73.2,49.5,50,36.6,23.2,21.6,13.7,10.8,16.4,24.7,22.7,23.2,34.4,56.8,70.5,
  83.8,86.4,77.4,72.1,71.3,73.6,73,59,45.8,44.4,47.4,60,55.7,51.4,42.1,32.8,66.2,83.2,91.6,84.3,
  92.1,80.1,80.2,84.4,86.1,75,53,56.1,69,67.3,76.2,64,42.5,38.4,22.2,14.4,13.4,6.7,6.8,9.3,
  7,7,5.7,10,18.2,27.2,61.5,81.4,90.8,95.5,86.2,93.1,88.8,90.6,79.2,69.1,41,25.8,15,7.81
];
const BB = [
  45.1,46.3,37.1,37.9,53,71.1,76,65.5,51,44.7,56.1,70,78.1,77.6,77,76.5,77.6,70.9,60.4,53.6,
  56,65.1,71.6,77,76.7,75.8,65.5,57.2,46.4,37.3,26.9,19.8,15.7,13.5,16.8,21.1,23.6,26.6,38.8,54,
  70.5,79.6,82.6,78.8,73.8,72.5,72.5,68.4,59,50,46,51,54.6,56,49.2,42.7,47.1,59.7,80.3,86.4,
  89.1,85.7,84.5,81.7,83.5,82.5,71.3,61.3,58.9,63.7,70.3,69.2,61.2,48.2,34.8,25.4,17.1,11.7,9.3,7.7,
  7.9,7.9,6.7,7.4,11,17.5,37.3,55.4,78.5,88.8,91,91.4,89.4,91,86.4,80,64.8,47.1,28.7,16.25
];

function levelY(v) {
  return 480.2 - 4.617 * v;
}

function ribbon(svg, i) {
  const x0 = FIRST_X + STEP * i, x1 = x0 + STEP;
  const d0 = AA[i] - BB[i], d1 = AA[i + 1] - BB[i + 1];
  const up = '#960096', down = '#989898';
  const p = (x, v) => x + ',' + levelY(v);
  const shape = (points, fill) => add(svg, 'polygon', { points: points.join(' '), fill: fill, 'shape-rendering': 'crispEdges' });
  if (d0 * d1 >= 0) {
    shape([p(x0, AA[i]), p(x1, AA[i + 1]), p(x1, BB[i + 1]), p(x0, BB[i])], d0 + d1 > 0 ? up : down);
    return;
  }
  const k = d0 / (d0 - d1);
  const cross = p(x0 + STEP * k, AA[i] + (AA[i + 1] - AA[i]) * k);
  shape([p(x0, AA[i]), cross, p(x0, BB[i])], d0 > 0 ? up : down);
  shape([p(x1, AA[i + 1]), cross, p(x1, BB[i + 1])], d1 > 0 ? up : down);
}

function drawIndicator() {
  const svg = document.getElementById('indicator');
  const grid = { stroke: '#b00000', 'stroke-dasharray': '1 3' };

  [80, 60, 40, 20].forEach(v => {
    const y = Math.round(levelY(v)) + 0.5;
    add(svg, 'line', { x1: 0, x2: 1564, y1: y, y2: y, ...grid });
  });
  [8, 29, 51, 68, 88].forEach(i => add(svg, 'line', { x1: barX(i) + 0.5, x2: barX(i) + 0.5, y1: 23, y2: 488, ...grid }));
  add(svg, 'rect', { x: 5, y: 19, width: 1503, height: 1, fill: '#d0d0d0' });
  add(svg, 'rect', { x: 5, y: 479, width: 1503, height: 2, fill: '#0f0' });

  const dots = [[80, '#fff', 3], [20, '#ff0', 3], [8, '#f0f', 3], [0, '#f0f', 2.5]];
  dots.forEach(d => {
    for (let i = 0; i < 100; i++) {
      const x = barX(i), y = Math.round(levelY(d[0])), r = d[2];
      if (d[0]) add(svg, 'path', { d: `M${x - r} ${y}L${x} ${y - r}L${x + r} ${y}L${x} ${y + r}Z`, fill: d[1], stroke: d[1], 'stroke-width': d[0] === 8 ? 0 : 1 });
      else add(svg, 'circle', { cx: x, cy: y, r: r, fill: d[1] });
    }
  });

  for (let i = 0; i < 99; i++) ribbon(svg, i);
  const line = arr => arr.map((v, i) => (FIRST_X + STEP * i) + ',' + levelY(v)).join(' ');
  add(svg, 'polyline', { points: line(AA), fill: 'none', stroke: '#ff1010', 'stroke-dasharray': '3 1' });
  add(svg, 'polyline', { points: line(BB), fill: 'none', stroke: '#fff', 'stroke-dasharray': '3 1' });

  // trend band
  for (let i = 0; i < 100; i++) {
    const x = Math.round(FIRST_X + STEP * (i - 0.5));
    if (AA[i] > BB[i]) add(svg, 'rect', { x: x, y: 236, width: 16, height: 28, fill: '#ee82ee' });
  }
  for (let i = 0; i < 100; i++) {
    const x = Math.round(FIRST_X + STEP * (i - 0.5));
    if (AA[i] <= BB[i]) add(svg, 'rect', { x: x + 0.5, y: 236.5, width: 15, height: 27, fill: '#000', stroke: '#40e0b0' });
  }

  [34, 85].forEach(i => {
    const x = barX(i);
    add(svg, 'rect', { x: x - 4, y: 213, width: 9, height: 74, fill: '#f038b0' });
    add(svg, 'rect', { x: x - 1, y: 348, width: 3, height: 42, fill: '#f00' });
    add(svg, 'path', { d: `M${x - 4} 350L${x + 0.5} 341L${x + 5} 350Z`, fill: '#f00' });
    add(svg, 'circle', { cx: x, cy: 396, r: 7, fill: 'url(#redBall)' });
    label(svg, x, 194, '加仓', '#c0c0c0');
  });

  [6, 24, 42, 65, 95].forEach(i => {
    const x = barX(i);
    add(svg, 'circle', { cx: x, cy: 119, r: 7, fill: 'url(#blueBall)' });
    add(svg, 'rect', { x: x - 1, y: 111, width: 3, height: 47, fill: '#0f0' });
    add(svg, 'path', { d: `M${x - 5} 165H${x + 5}L${x} 172Z`, fill: '#00d000' });
    label(svg, x, 166, '卖', '#c0c0c0');
  });

  [79, 83].forEach(i => {
    const x = barX(i);
    add(svg, 'rect', { x: x - 1, y: 295, width: 2, height: 193, fill: '#f0f' });
    add(svg, 'circle', { cx: x, cy: 303, r: 7, fill: 'url(#redBall)' });
    add(svg, 'circle', { cx: x, cy: 488, r: 7, fill: 'url(#redBall)' });
    label(svg, x, 292, '买', '#c0c0c0');
  });
  [77, 78, 80, 81, 82, 99].forEach(i => add(svg, 'rect', { x: barX(i) - 2, y: 455, width: 5, height: 28, rx: 1, fill: '#f0f' }));
}

function drawLevelAxis() {
  const svg = document.getElementById('levelAxis');
  for (let v = 20; v <= 100; v += 10) {
    const y = Math.round(levelY(v));
    add(svg, 'rect', { x: 0, y: y, width: 5, height: 1, fill: '#b00000' });
    label(svg, 13, y, v === 100 ? '100.0' : v + '.00', '#ff3c3c', 'num');
  }
}

function drawDates() {
  const svg = document.getElementById('dates');
  label(svg, 4, 8, '2025年', '#ff3c3c', 'num');
  [[8, '8'], [29, '9'], [51, '10'], [68, '11']].forEach(m => {
    add(svg, 'rect', { x: barX(m[0]) - 1, y: 0, width: 1, height: 16, fill: '#b00000' });
    label(svg, barX(m[0]), 8, m[1], '#ff3c3c', 'num');
  });
  add(svg, 'rect', { x: 1343, y: 0, width: 80, height: 15, fill: '#000080' });
  label(svg, 1344, 8, '2025/12/01/一', '#d0d0d0', 'num');
}

/* ---------- Ticks ---------- */
const ticks = [
  ['14:55','23.95',76,'',9],['','23.96',59,'B',10],['','23.96',87,'B',20],['','23.97',19,'B',3],['','23.96',128,'S',37],
  ['','23.95',4,'S',2],['14:56','23.95',378,'S',38],['','23.94',80,'S',42],['','23.94',9,'B',7],['','23.94',102,'B',33],
  ['','23.94',32,'S',12],['','23.94',37,'S',22],['','23.94',21,'',8],['','23.93',58,'S',17],['','23.93',58,'B',17],
  ['','23.93',24,'B',13],['','23.92',62,'S',11],['','23.92',81,'S',18],['','23.95',215,'B',32],['','23.94',51,'S',12],
  ['','23.95',45,'B',16],['','23.94',20,'S',5],['','23.94',27,'B',8],['','23.93',64,'S',10],['','23.93',89,'B',13],
  ['','23.94',281,'B',27],['14:57','23.94',3,'S',1],['15:00','23.89',2434,'',307]
];

function fillTicks() {
  const body = document.getElementById('tickRows');
  ticks.forEach((t, i) => {
    const row = body.insertRow();
    if (t[0] && i > 0) row.className = 'minute';
    const side = t[3] === 'B' ? 'buyer' : 'seller';
    const vol = t[2] > 1000 ? 'violet' : '';
    row.innerHTML = `<td>${t[0]}</td><td>${t[1]}</td><td class="${vol}">${t[2]}</td><td class="${side}">${t[3]}</td><td>${t[4]}</td>`;
  });
}

drawKline();
drawPriceAxis();
drawIndicator();
drawLevelAxis();
drawDates();
fillTicks();
```
